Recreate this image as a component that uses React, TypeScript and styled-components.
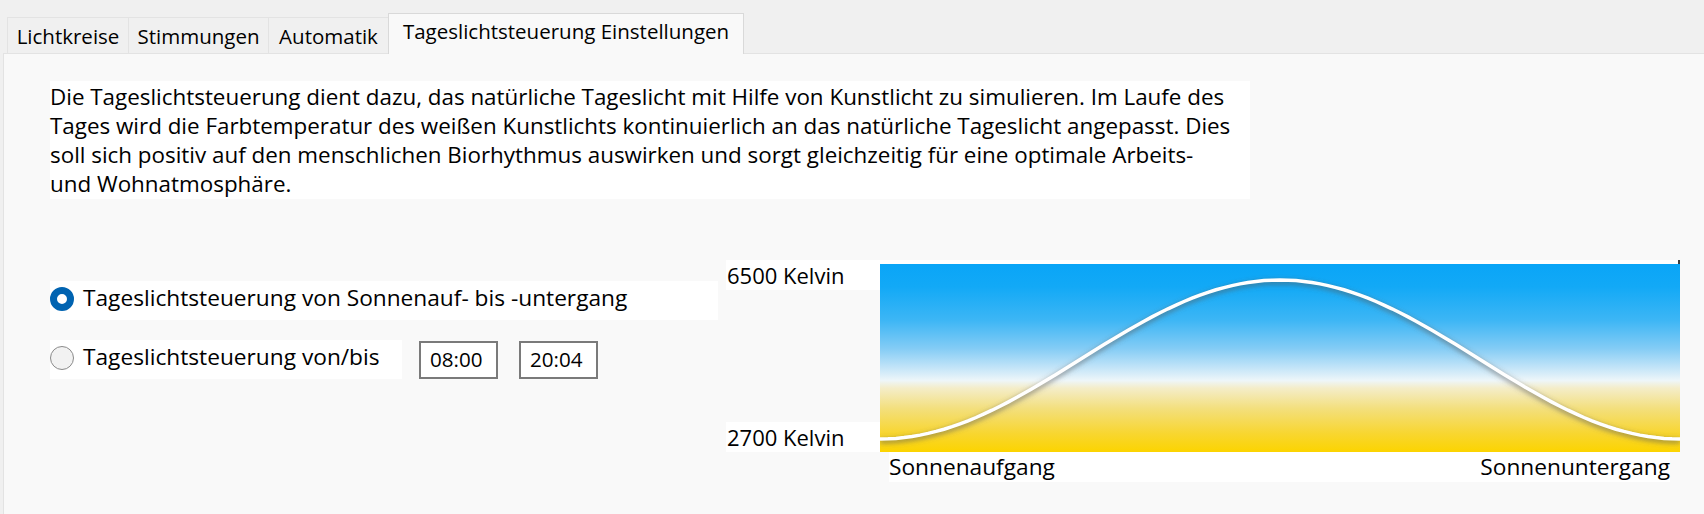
import styled, { createGlobalStyle } from "styled-components";

const GlobalStyle = createGlobalStyle`
  html, body {
    margin: 0;
    padding: 0;
    background: #f0f0f0;
  }
  body {
    font-family: "Segoe UI", "Open Sans", sans-serif;
    color: #000;
  }
`

const Window = styled.div`
  width: 1704px;
  height: 514px;
  display: flex;
  flex-direction: column;
  overflow: hidden;
  background: #f0f0f0;
`

const TabStrip = styled.div`
  display: flex;
  align-items: flex-end;
  height: 53px;
  padding-left: 7px;
  box-sizing: border-box;
  position: relative;
  z-index: 1;
`

const Tab = styled.div<{ $active?: boolean; $width: number }>`
  width: ${props => props.$width}px;
  height: ${props => props.$active ? "41px" : "36px"};
  margin-bottom: ${props => props.$active ? "-1px" : "0"};
  margin-right: -1px;
  box-sizing: border-box;
  padding-top: ${props => props.$active ? "5px" : "6px"};
  border: 1px solid ${props => props.$active ? "#d9d9d9" : "#e3e3e3"};
  border-bottom: none;
  background: ${props => props.$active ? "#f9f9f9" : "#f0f0f0"};
  font-size: 20.5px;
  line-height: 24px;
  text-align: center;
  white-space: nowrap;
`

const Panel = styled.div`
  flex: 1;
  margin-left: 3px;
  border-top: 1px solid #e3e3e3;
  border-left: 1px solid #e3e3e3;
  background: #f9f9f9;
  padding: 27px 0 0 46px;
`

const Description = styled.p`
  margin: 0;
  width: 1200px;
  height: 118px;
  box-sizing: border-box;
  padding-top: 1px;
  background: #fff;
  font-size: 22.4px;
  line-height: 29px;
  white-space: nowrap;
`

const LowerRow = styled.div`
  display: flex;
  align-items: flex-start;
  margin-top: 61px;
`

const Options = styled.div`
  width: 676px;
  padding-top: 21px;
  display: flex;
  flex-direction: column;
  gap: 20px;
`

const OptionRow = styled.div`
  display: flex;
  align-items: center;
`

const OptionLabel = styled.label<{ $width: number }>`
  width: ${props => props.$width}px;
  height: 39px;
  box-sizing: border-box;
  padding: 0 0 6px 0;
  background: #fff;
  display: flex;
  align-items: center;
  gap: 9px;
  font-size: 22.7px;
  line-height: 31px;
  white-space: nowrap;
`

const Radio = styled.span<{ $checked?: boolean }>`
  width: 24px;
  height: 24px;
  margin-top: 3px;
  border-radius: 50%;
  box-sizing: border-box;
  flex-shrink: 0;
  background: ${props => props.$checked ? "#fff" : "#f2f2f2"};
  border: ${props => props.$checked ? "7.5px solid #0063b1" : "1.5px solid #8a8a8a"};
`

const TimeField = styled.div<{ $gap: number }>`
  margin-left: ${props => props.$gap}px;
  width: 79px;
  height: 38px;
  box-sizing: border-box;
  border: 2px solid #7a7a7a;
  background: #fff;
  padding: 0 0 2px 9px;
  display: flex;
  align-items: center;
  font-size: 20.6px;
`

const ChartBlock = styled.div`
  display: grid;
  grid-template-columns: 154px 800px;
`

const AxisColumn = styled.div`
  height: 192px;
  display: flex;
  flex-direction: column;
  justify-content: space-between;
`

const AxisLabel = styled.div`
  height: 30px;
  background: #fff;
  padding-left: 1px;
  font-size: 22px;
  line-height: 30px;
  white-space: nowrap;
`

const ChartFrame = styled.div`
  position: relative;
  background: #fff;
  padding-top: 4px;
  height: 188px;

  svg {
    display: block;
  }

  &::after {
    content: "";
    position: absolute;
    top: 0;
    right: 0;
    width: 2px;
    height: 4px;
    background: #3c3c3c;
  }
`

const SunLabels = styled.div`
  grid-column: 2;
  margin-left: 9px;
  width: 781px;
  height: 30px;
  background: #fff;
  display: flex;
  justify-content: space-between;
  font-size: 22.7px;
  line-height: 30px;
  white-space: nowrap;
`

const W = 800
const H = 188

const curvePath = () => {
  const pts: string[] = []
  for (let i = 0; i <= 100; i++) {
    const t = i / 100
    const y = 175 - 159 * (1 - Math.cos(2 * Math.PI * t)) / 2
    pts.push(`${i === 0 ? "M" : "L"}${(t * W).toFixed(1)},${y.toFixed(1)}`)
  }
  return pts.join(" ")
}

const DaylightChart = () => {
  const d = curvePath()
  return (
    <svg width={W} height={H} viewBox={`0 0 ${W} ${H}`}>
      <defs>
        <linearGradient id="sky" x1="0" y1="0" x2="0" y2="1">
          <stop offset="0" stopColor="#0aa5f7"/>
          <stop offset="0.12" stopColor="#12a9f6"/>
          <stop offset="0.3" stopColor="#3db6f5"/>
          <stop offset="0.45" stopColor="#84ccf5"/>
          <stop offset="0.55" stopColor="#c2e4f8"/>
          <stop offset="0.62" stopColor="#eef6f9"/>
          <stop offset="0.66" stopColor="#f4edc9"/>
          <stop offset="0.77" stopColor="#f3df7c"/>
          <stop offset="0.9" stopColor="#f8d631"/>
          <stop offset="1" stopColor="#fcd400"/>
        </linearGradient>
        <filter id="glow" x="-5%" y="-20%" width="110%" height="140%">
          <feGaussianBlur stdDeviation="2.5"/>
        </filter>
      </defs>
      <rect width={W} height={H} fill="url(#sky)"/>
      <path d={d} fill="none" stroke="#5a5a5a" strokeOpacity="0.55" strokeWidth="5" transform="translate(0,2)" filter="url(#glow)"/>
      <path d={d} fill="none" stroke="#fff" strokeWidth="3.5"/>
    </svg>
  )
}

export default function App() {
  return (
    <Window>
      <GlobalStyle/>
      <TabStrip>
        <Tab $width={122}>Lichtkreise</Tab>
        <Tab $width={141}>Stimmungen</Tab>
        <Tab $width={121}>Automatik</Tab>
        <Tab $width={356} $active>Tageslichtsteuerung Einstellungen</Tab>
      </TabStrip>
      <Panel>
        <Description>
          Die Tageslichtsteuerung dient dazu, das natürliche Tageslicht mit Hilfe von Kunstlicht zu simulieren. Im Laufe des<br/>
          Tages wird die Farbtemperatur des weißen Kunstlichts kontinuierlich an das natürliche Tageslicht angepasst. Dies<br/>
          soll sich positiv auf den menschlichen Biorhythmus auswirken und sorgt gleichzeitig für eine optimale Arbeits-<br/>
          und Wohnatmosphäre.
        </Description>
        <LowerRow>
          <Options>
            <OptionRow>
              <OptionLabel $width={668}>
                <Radio $checked/>
                Tageslichtsteuerung von Sonnenauf- bis -untergang
              </OptionLabel>
            </OptionRow>
            <OptionRow>
              <OptionLabel $width={352}>
                <Radio/>
                Tageslichtsteuerung von/bis
              </OptionLabel>
              <TimeField $gap={17}>08:00</TimeField>
              <TimeField $gap={21}>20:04</TimeField>
            </OptionRow>
          </Options>
          <ChartBlock>
            <AxisColumn>
              <AxisLabel>6500 Kelvin</AxisLabel>
              <AxisLabel>2700 Kelvin</AxisLabel>
            </AxisColumn>
            <ChartFrame>
              <DaylightChart/>
            </ChartFrame>
            <SunLabels>
              <span>Sonnenaufgang</span>
              <span>Sonnenuntergang</span>
            </SunLabels>
          </ChartBlock>
        </LowerRow>
      </Panel>
    </Window>
  )
}
